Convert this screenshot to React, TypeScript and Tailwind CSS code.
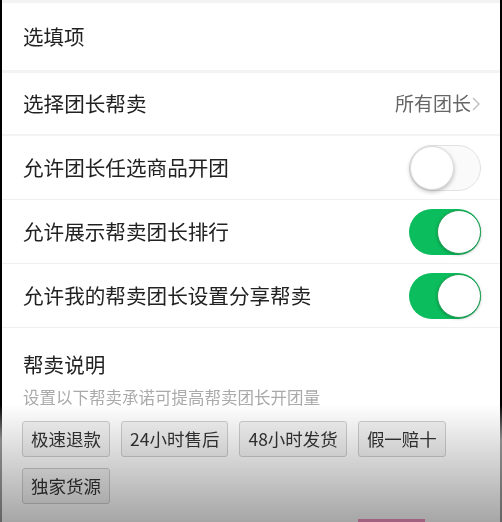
import * as React from 'react';

const font = { fontFamily: '"Noto Sans CJK SC", "Noto Sans", sans-serif' };

const Toggle = ({ on }: { on: boolean }) =>
  on ? (
    <div className="flex h-[46px] w-[72px] items-center justify-end rounded-full bg-[#0bbd5c]">
      <div className="h-[44px] w-[44px] rounded-full border border-[#1f9f55] bg-white shadow-[0_1px_3px_rgba(0,0,0,0.25)]" />
    </div>
  ) : (
    <div className="flex h-[46px] w-[72px] items-center rounded-full border border-[#e2e2e2] bg-[#fafafa]">
      <div className="h-[44px] w-[44px] rounded-full border border-[#dcdcdc] bg-white shadow-[0_2px_4px_rgba(0,0,0,0.25)]" />
    </div>
  );

const tags = ['极速退款', '24小时售后', '48小时发货', '假一赔十', '独家货源'];

const switches = [
  { label: '允许团长任选商品开团', on: false },
  { label: '允许展示帮卖团长排行', on: true },
  { label: '允许我的帮卖团长设置分享帮卖', on: true }
];

export default function App() {
  return (
    <div
      className="relative flex h-[522px] w-[502px] overflow-hidden bg-[linear-gradient(to_bottom,#000_405px,#9a9a9a_440px)] px-[2px]"
      style={font}
    >
      <div className="flex flex-1 flex-col bg-white">
        <div className="h-[3px] bg-[#f3f3f3]" />
        <div className="flex h-[67px] items-center pl-[21px] text-[20.5px] text-[#222]">选填项</div>
        <div className="h-[3px] bg-[#f3f3f3]" />
        <div className="flex h-[61px] items-center justify-between pl-[21px] pr-[20px]">
          <span className="text-[20.6px] text-[#222]">选择团长帮卖</span>
          <span className="flex items-center text-[19px] text-[#666]">
            所有团长
            <svg width="8" height="14" viewBox="0 0 8 14" className="ml-[1px]">
              <path d="M1 1l6 6-6 6" fill="none" stroke="#bbb" strokeWidth="1.3" />
            </svg>
          </span>
        </div>
        <div className="h-[2px] bg-[#f3f3f3]" />
        {switches.map(s => (
          <React.Fragment key={s.label}>
            <div className="flex h-[63px] items-center justify-between pl-[21px] pr-[19px]">
              <span className="text-[20.6px] text-[#222]">{s.label}</span>
              <Toggle on={s.on} />
            </div>
            <div className="h-px bg-[#f0f0f0]" />
          </React.Fragment>
        ))}
        <div className="pl-[20px] pt-[22px]">
          <div className="pl-px text-[20.6px] leading-[28px] text-[#222]">帮卖说明</div>
          <div className="mt-[8px] pl-px text-[16.5px] leading-[22px] text-[#aaa]">设置以下帮卖承诺可提高帮卖团长开团量</div>
          <div className="mt-[13px] flex w-[440px] flex-wrap gap-x-[11px] gap-y-[11px]">
            {tags.map(t => (
              <div
                key={t}
                className="flex h-[36px] items-center rounded-[3px] border border-[#cfcfcf] bg-[#f4f4f4] px-[8px] text-[17.5px] text-[#333]"
              >
                {t}
              </div>
            ))}
          </div>
        </div>
      </div>
      <div className="pointer-events-none absolute inset-x-0 bottom-0 h-[118px] bg-gradient-to-b from-white to-[#a5a6a5] mix-blend-multiply" />
      <div className="absolute bottom-0 left-[358px] h-[3px] w-[67px] bg-[#a0607f]" />
    </div>
  );
}
